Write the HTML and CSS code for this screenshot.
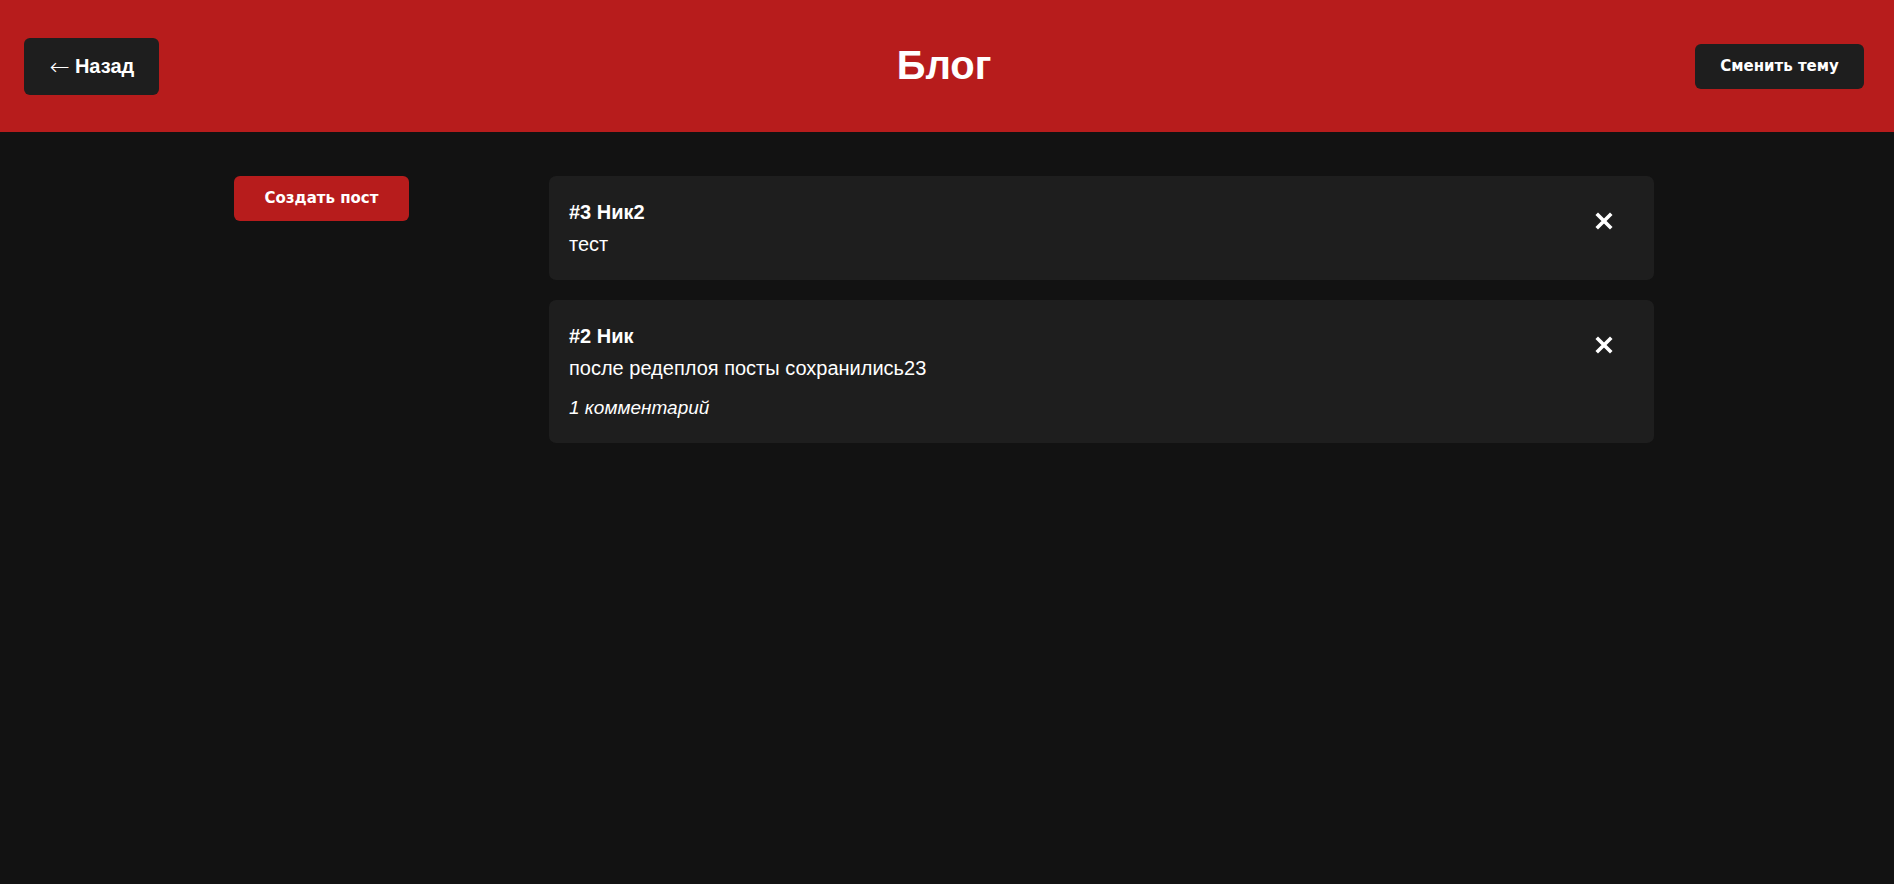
FILE: index.html
```html
<!DOCTYPE html>
<html lang="ru">
<head>
<meta charset="utf-8">
<title>Блог</title>
<link rel="stylesheet" href="styles.css">
</head>
<body>
<header class="topbar">
  <div class="topbar-left">
    <button class="btn-back"><span class="arrow">←</span> Назад</button>
  </div>
  <h1 class="title">Блог</h1>
  <div class="topbar-right">
    <button class="btn-theme">Сменить тему</button>
  </div>
</header>
<main class="layout">
  <aside class="sidebar">
    <button class="btn-create">Создать пост</button>
  </aside>
  <section class="posts">
    <article class="post">
      <div class="post-body">
        <h3 class="post-title">#3 Ник2</h3>
        <p class="post-text">тест</p>
      </div>
      <button class="btn-delete" aria-label="Удалить">
        <svg width="18" height="18" viewBox="0 0 18 18"><path d="M3 3 L15 15 M15 3 L3 15" stroke="#fff" stroke-width="3.6" stroke-linecap="square" fill="none"/></svg>
      </button>
    </article>
    <article class="post">
      <div class="post-body">
        <h3 class="post-title">#2 Ник</h3>
        <p class="post-text">после редеплоя посты сохранились23</p>
        <p class="post-comments">1 комментарий</p>
      </div>
      <button class="btn-delete" aria-label="Удалить">
        <svg width="18" height="18" viewBox="0 0 18 18"><path d="M3 3 L15 15 M15 3 L3 15" stroke="#fff" stroke-width="3.6" stroke-linecap="square" fill="none"/></svg>
      </button>
    </article>
  </section>
</main>
</body>
</html>
```
FILE: styles.css
```css
* { box-sizing: border-box; }
html, body {
  margin: 0;
  padding: 0;
  background: #121212;
  color: #ffffff;
  font-family: "Liberation Sans", Arial, sans-serif;
  min-height: 100%;
}
body { min-height: 884px; }
button { cursor: pointer; border: none; color: #fff; }

.topbar {
  height: 132px;
  background: #b71c1c;
  display: grid;
  grid-template-columns: 1fr auto 1fr;
  align-items: center;
  padding: 0 30px 0 24px;
}
.topbar-left { display: flex; justify-content: flex-start; }
.topbar-right { display: flex; justify-content: flex-end; }
.title {
  margin: 0;
  font-size: 40px;
  font-weight: 700;
  line-height: 48px;
  padding-bottom: 2px;
}
.btn-back {
  background: #1e1e1e;
  font-family: "Liberation Sans", Arial, sans-serif;
  font-size: 20px;
  font-weight: 700;
  line-height: 25px;
  height: 57px;
  padding: 0 0 0 1px;
  border-radius: 6px;
  width: 135px;
  white-space: nowrap;
  display: flex;
  align-items: center;
  justify-content: center;
  gap: 5px;
}
.arrow {
  font-family: "DejaVu Sans", sans-serif;
  font-weight: 200;
  font-size: 24px;
  line-height: 25px;
  position: relative;
  top: 1px;
}
.btn-theme {
  background: #1e1e1e;
  font-family: "DejaVu Sans", Verdana, sans-serif;
  font-size: 15px;
  font-weight: 700;
  line-height: 21px;
  height: 45px;
  width: 169px;
  padding: 0;
  border-radius: 6px;
}

.layout {
  display: flex;
  padding: 44px 240px 0 234px;
}
.sidebar {
  flex: 0 0 315px;
}
.btn-create {
  background: #b71c1c;
  font-family: "DejaVu Sans", Verdana, sans-serif;
  font-size: 15px;
  font-weight: 700;
  line-height: 21px;
  width: 175px;
  height: 45px;
  padding: 0;
  border-radius: 6px;
}
.posts {
  flex: 1;
  display: flex;
  flex-direction: column;
  gap: 20px;
}
.post {
  background: #1e1e1e;
  border-radius: 7px;
  padding: 24px 20px 24px 20px;
  display: flex;
  align-items: flex-start;
  justify-content: space-between;
}
.post-body {
  display: flex;
  flex-direction: column;
}
.post-title {
  margin: 0;
  font-size: 20px;
  font-weight: 700;
  line-height: 24px;
}
.post-text {
  margin: 8px 0 0;
  font-size: 20px;
  line-height: 24px;
}
.post-comments {
  margin: 17px 0 0;
  font-size: 19px;
  font-style: italic;
  line-height: 22px;
}
.btn-delete {
  background: transparent;
  width: 60px;
  height: 42px;
  padding: 0;
  display: flex;
  align-items: center;
  justify-content: center;
}
.btn-delete svg { display: block; }
```
